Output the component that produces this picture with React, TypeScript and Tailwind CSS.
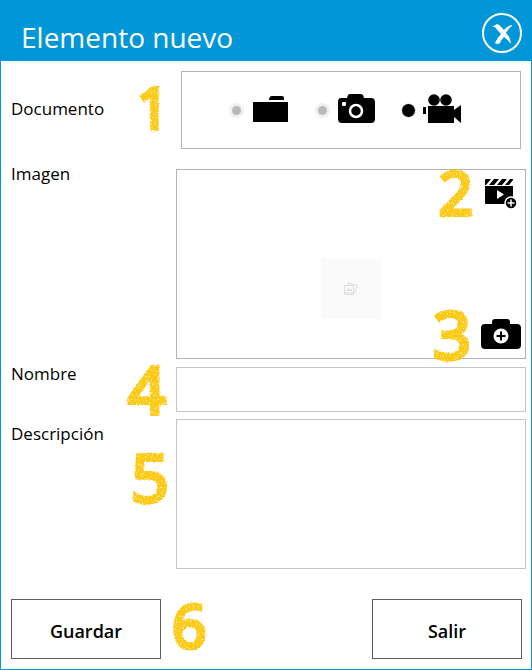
import React, { useState } from "react";

const Mark = ({ n, className }: any) => (
  <span
    aria-hidden="true"
    className={`pointer-events-none absolute z-10 leading-none font-normal text-[#fcc914] [-webkit-text-stroke:4px_#fcc914] [stroke-linejoin:round] [filter:url(#crayon)] ${className}`}
  >
    {n}
  </span>
);

const FolderIcon = () => (
  <svg width="38" height="32" viewBox="0 0 38 32">
    <path d="M1 8h35v20H1zM17 6c0-2 1-4 3-4h10q2 0 2 2v2z" />
  </svg>
);

const CameraIcon = () => (
  <svg width="38" height="32" viewBox="0 0 38 32">
    <path d="M3 4h6l1-3q1-1 2-1h10q2 0 3 1l1 3h7q4 0 4 4v17q0 4-4 4H4q-4 0-4-4V8q0-4 3-4z" />
    <rect x="4" y="8" width="4" height="4" rx="1" fill="white" />
    <circle cx="18" cy="17" r="6" fill="none" stroke="white" strokeWidth="2.5" />
  </svg>
);

const VideoIcon = () => (
  <svg width="38" height="32" viewBox="0 0 38 32" className="overflow-visible">
    <circle cx="10" cy="6" r="5.8" />
    <circle cx="22" cy="6" r="5.8" />
    <path d="M-1 13h3v7h-3zM4 12h26v4l7-5v18l-7-6v6H4z" />
  </svg>
);

const ClapperIcon = () => (
  <svg width="32" height="32" viewBox="0 0 32 32">
    <path d="M0 8h28v17q0 1-1 1H1q-1 0-1-1z" />
    <path d="M0 2q0-1 1-1h5L1 7H0zM9 1h5L9 7H4zM17 1h5l-5 6h-5zM25 1h3v1l-4 5h-4z" />
    <path d="M12 12l7 4.500-7 4.500z" fill="white" />
    <circle cx="26" cy="25" r="6" stroke="white" strokeWidth="1.500" />
    <path d="M26 21.500v7M22.500 25h7" stroke="white" strokeWidth="1.500" />
  </svg>
);

const AddPhotoIcon = () => (
  <svg width="40" height="30" viewBox="0 0 40 30">
    <path d="M4 5h7V3q0-3 3-3h12q3 0 3 3v2h7q4 0 4 4v17q0 4-4 4H4q-4 0-4-4V9q0-4 4-4z" />
    <circle cx="20" cy="17" r="7.500" fill="white" />
    <path d="M20 12.500v9M15.500 17h9" stroke="black" strokeWidth="2" />
  </svg>
);

const options = [
  { id: "archivo", label: "Archivo", Icon: FolderIcon },
  { id: "foto", label: "Foto", Icon: CameraIcon },
  { id: "video", label: "Video", Icon: VideoIcon },
];

const App = () => {
  const [tipo, setTipo] = useState("video");
  const [nombre, setNombre] = useState("");
  const [desc, setDesc] = useState("");

  return (
    <div className="w-full border border-t-0 border-[#0096d8] bg-white font-['Open_Sans',sans-serif] text-[17px] leading-6 text-black">
      {/* grain for the yellow marks */}
      <svg width="0" height="0" className="absolute">
        <filter id="crayon" x="-20%" y="-10%" width="140%" height="120%" colorInterpolationFilters="sRGB">
          <feTurbulence type="fractalNoise" baseFrequency="0.7" numOctaves="2" seed="4" result="noise" />
          <feDisplacementMap in="SourceGraphic" in2="noise" scale="3" xChannelSelector="R" yChannelSelector="G" result="rough" />
          <feColorMatrix in="noise" type="matrix" values="0 0 0 0 0  0 0 0 0 0  0 0 0 0 0  0 0 0 -4 3.300" result="holes" />
          <feComposite in="rough" in2="holes" operator="in" />
        </filter>
      </svg>

      <header className="flex h-[61px] items-center justify-between bg-[#0096d8] pt-3 pr-2 pl-5 text-white">
        <h1 className="text-[28px]">Elemento nuevo</h1>
        <button type="button" aria-label="Cerrar" className="-mt-2 cursor-pointer">
          <svg width="42" height="42" viewBox="0 0 42 42">
            <circle cx="21" cy="21" r="19" fill="none" stroke="white" strokeWidth="2" />
            <path
              d="M11 15l5-3q2 0 7 6 3-4 8-5v1q-4 3-6 7 5 5 5 11-4-5-7-7-3 3-4 6-3 2-5 0 2-5 6-9-4-4-6-7z"
              fill="white"
            />
          </svg>
        </button>
      </header>

      <form className="pt-[10px] pr-[5px] pb-[10px] pl-[10px]" onSubmit={(e) => e.preventDefault()}>
        <div role="radiogroup" aria-labelledby="documento" className="relative flex items-center">
          <span id="documento" className="w-[170px] shrink-0 pb-[2px]">Documento</span>
          <Mark n="1" className="left-[126px] top-2 text-[56px]" />
          <div className="mr-[5px] flex h-[78px] flex-1 items-center justify-center gap-[25px] border border-[#b4b4b4] pr-3">
            {options.map(({ id, label, Icon }) => (
              <label key={id} className="flex cursor-pointer items-center gap-2">
                <input
                  type="radio"
                  name="tipo"
                  aria-label={label}
                  checked={tipo === id}
                  onChange={() => setTipo(id)}
                  className="size-[15px] appearance-none rounded-full border-[3px] border-[#f0f0f0] bg-[#bababa] checked:border checked:border-white checked:bg-black"
                />
                <Icon />
              </label>
            ))}
          </div>
        </div>

        <div className="mt-5 flex">
          <span className="-mt-[7px] w-[165px] shrink-0">Imagen</span>
          <div className="relative flex h-[190px] flex-1 items-center justify-center border border-[#b4b4b4]">
            <div className="mt-[50px] flex size-[60px] items-center justify-center bg-[#fafafa]">
              <svg width="16" height="16" viewBox="0 0 16 16" fill="none" stroke="#dcdcdc">
                <path d="M1.500 4.500h9v9h-9zM5 4V2l9 2-2 8h-1" />
                <path d="M3 10l2-3 2 2 2-2v3z" fill="#dedede" stroke="none" />
                <path d="M2 12h8" />
              </svg>
            </div>
            <Mark n="2" className="right-[52px] -top-2 text-[60px]" />
            <button type="button" aria-label="Agregar video" className="absolute top-2 right-2 cursor-pointer">
              <ClapperIcon />
            </button>
            <Mark n="3" className="right-[54px] -bottom-2 text-[66px]" />
            <button type="button" aria-label="Agregar foto" className="absolute right-1 bottom-[9px] cursor-pointer">
              <AddPhotoIcon />
            </button>
          </div>
        </div>

        <div className="relative mt-2 flex">
          <label htmlFor="nombre" className="-mt-[5px] w-[165px] shrink-0">Nombre</label>
          <Mark n="4" className="left-[117px] -top-3 text-[66px]" />
          <input
            id="nombre"
            type="text"
            value={nombre}
            onChange={(e) => setNombre(e.target.value)}
            className="h-[45px] min-w-0 flex-1 border border-[#c4c4c4] px-2 outline-none"
          />
        </div>

        <div className="relative mt-[7px] flex">
          <label htmlFor="desc" className="w-[165px] shrink-0 pt-[3px]">Descripción</label>
          <Mark n="5" className="left-[120px] top-6 text-[66px]" />
          <textarea
            id="desc"
            value={desc}
            onChange={(e) => setDesc(e.target.value)}
            className="h-[150px] min-w-0 flex-1 resize-none border border-[#c4c4c4] p-2 outline-none"
          ></textarea>
        </div>

        <div className="relative mt-[30px] mr-[4px] flex justify-between text-lg font-semibold">
          <button type="submit" className="h-[60px] w-[150px] cursor-pointer border border-[#5c5c5c] pt-1">
            Guardar
          </button>
          <Mark n="6" className="left-[161px] -top-1 text-[60px]" />
          <button type="button" className="h-[60px] w-[150px] cursor-pointer border border-[#5c5c5c] pt-1">
            Salir
          </button>
        </div>
      </form>
    </div>
  );
};

export default App;
